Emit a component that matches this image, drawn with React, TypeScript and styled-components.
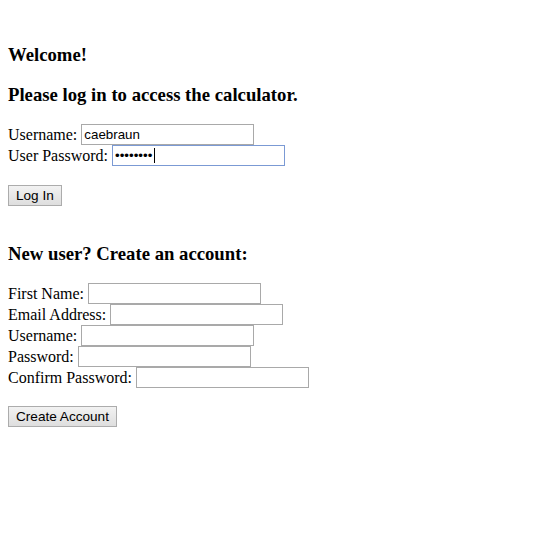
import React from "react";
import styled, { createGlobalStyle } from "styled-components";

const Global = createGlobalStyle`
  html, body { background: #ffffff; }
  body {
    margin: 8px;
    font-family: "Liberation Serif", "Times New Roman", serif;
    font-size: 16px;
    color: #000000;
  }
`;

const Page = styled.main`
  display: block;
  padding-top: 17px;
`;

const Heading = styled.h3`
  font-size: 18.72px;
  font-weight: bold;
  margin: 18.72px 0;
  line-height: 21.5px;
`;

const Form = styled.form<{ $gapAfter?: number }>`
  display: flex;
  flex-direction: column;
  align-items: flex-start;
  margin: 0 0 ${(p) => p.$gapAfter ?? 0}px;
`;

const Row = styled.label`
  display: flex;
  align-items: center;
  height: 21px;
  white-space: pre;
`;

const TextInput = styled.input<{ $focused?: boolean }>`
  box-sizing: border-box;
  width: 173px;
  height: 21px;
  margin: 0;
  padding: 1px 2px;
  font-family: "Liberation Sans", Arial, sans-serif;
  font-size: 13.33px;
  color: #000;
  background: #fff;
  border: 1px solid ${(p) => (p.$focused ? "#7b9ad4" : "#a9a9a9")};
  border-radius: 0;
  outline: none;
  caret-color: #000;
`;

const Caret = styled.span`
  position: absolute;
  left: 42px;
  top: 3px;
  width: 1px;
  height: 15px;
  background: #000;
`;

const FieldWrap = styled.span`
  position: relative;
  display: inline-flex;
`;

const Button = styled.button<{ $gapBefore: number }>`
  box-sizing: border-box;
  height: 21px;
  margin-top: ${(p) => p.$gapBefore}px;
  padding: 0 7px;
  font-family: "Liberation Sans", Arial, sans-serif;
  font-size: 13.6px;
  color: #000;
  background: linear-gradient(#f2f2f2, #dedede);
  border: 1px solid #acacac;
  border-radius: 0;
`;

export default function App() {
  return (
    <>
      <Global />
      <Page>
        <Heading>Welcome!</Heading>
        <Heading>Please log in to access the calculator.</Heading>
        <Form $gapAfter={37} onSubmit={(e) => e.preventDefault()}>
          <Row>
            Username: <TextInput type="text" defaultValue="caebraun" />
          </Row>
          <Row>
            User Password:{" "}
            <FieldWrap>
              <TextInput $focused type="password" defaultValue="password" />
              <Caret />
            </FieldWrap>
          </Row>
          <Button $gapBefore={19} type="submit">Log In</Button>
        </Form>
        <Heading>New user? Create an account:</Heading>
        <Form onSubmit={(e) => e.preventDefault()}>
          <Row>
            First Name: <TextInput type="text" />
          </Row>
          <Row>
            Email Address: <TextInput type="text" />
          </Row>
          <Row>
            Username: <TextInput type="text" />
          </Row>
          <Row>
            Password: <TextInput type="password" />
          </Row>
          <Row>
            Confirm Password: <TextInput type="password" />
          </Row>
          <Button $gapBefore={18} type="submit">Create Account</Button>
        </Form>
      </Page>
    </>
  );
}
